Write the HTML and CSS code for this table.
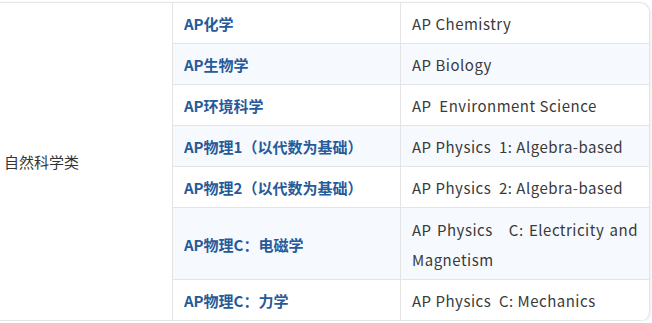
FILE: index.html
```html
<!DOCTYPE html>
<html lang="zh-CN">
<head>
<meta charset="utf-8">
<link rel="stylesheet" href="styles.css">
</head>
<body>
<div class="frame">
  <table class="courses">
    <colgroup>
      <col class="c1"><col class="c2"><col class="c3">
    </colgroup>
    <tbody>
      <tr>
        <td class="cat" rowspan="7">自然科学类</td>
        <td class="name">AP化学</td>
        <td class="en">AP Chemistry</td>
      </tr>
      <tr class="alt">
        <td class="name">AP生物学</td>
        <td class="en">AP Biology</td>
      </tr>
      <tr>
        <td class="name">AP环境科学</td>
        <td class="en">AP&nbsp; Environment Science</td>
      </tr>
      <tr class="alt">
        <td class="name">AP物理1（以代数为基础）</td>
        <td class="en">AP Physics&nbsp; 1: Algebra-based</td>
      </tr>
      <tr>
        <td class="name">AP物理2（以代数为基础）</td>
        <td class="en">AP Physics&nbsp; 2: Algebra-based</td>
      </tr>
      <tr class="alt tall">
        <td class="name">AP物理C：电磁学</td>
        <td class="en just">AP Physics&nbsp;&nbsp; C: Electricity and Magnetism</td>
      </tr>
      <tr>
        <td class="name">AP物理C：力学</td>
        <td class="en">AP Physics&nbsp; C: Mechanics</td>
      </tr>
    </tbody>
  </table>
</div>
</body>
</html>
```
FILE: styles.css
```css
html, body {
  margin: 0;
  padding: 0;
  background: #ffffff;
}
body {
  font-family: "Noto Sans CJK SC", "Noto Sans", sans-serif;
  font-size: 15px;
  color: #333333;
}
.frame {
  padding-top: 2px;
  width: 649px;
}
.courses {
  width: 649px;
  border-collapse: separate;
  border-spacing: 0;
  table-layout: fixed;
  border-top: 1px solid #e4e4e4;
  border-right: 1px solid #e4e4e4;
  border-radius: 0 10px 10px 0;
  box-shadow: 1px 1px 3px rgba(0, 0, 0, 0.08);
  overflow: hidden;
}
.c1 { width: 172px; }
.c2 { width: 228px; }
.c3 { width: 249px; }
.courses td {
  padding: 6px 11px 4px;
  line-height: 30px;
  border-bottom: 1px solid #e4e4e4;
  border-left: 1px solid #e4e4e4;
  vertical-align: middle;
}
.courses tr.tall td {
  padding-top: 7px;
}
.courses td.cat {
  border-left: none;
  padding: 5px 4px;
  color: #333333;
  background: #ffffff;
}
.courses td.name {
  font-weight: 700;
  color: #275a99;
}
.courses td.en {
  color: #3a3a3a;
  letter-spacing: 0.5px;
}
.courses td.just {
  text-align: justify;
}
.courses tr.alt td.name,
.courses tr.alt td.en {
  background: #f6f9fe;
}
```
